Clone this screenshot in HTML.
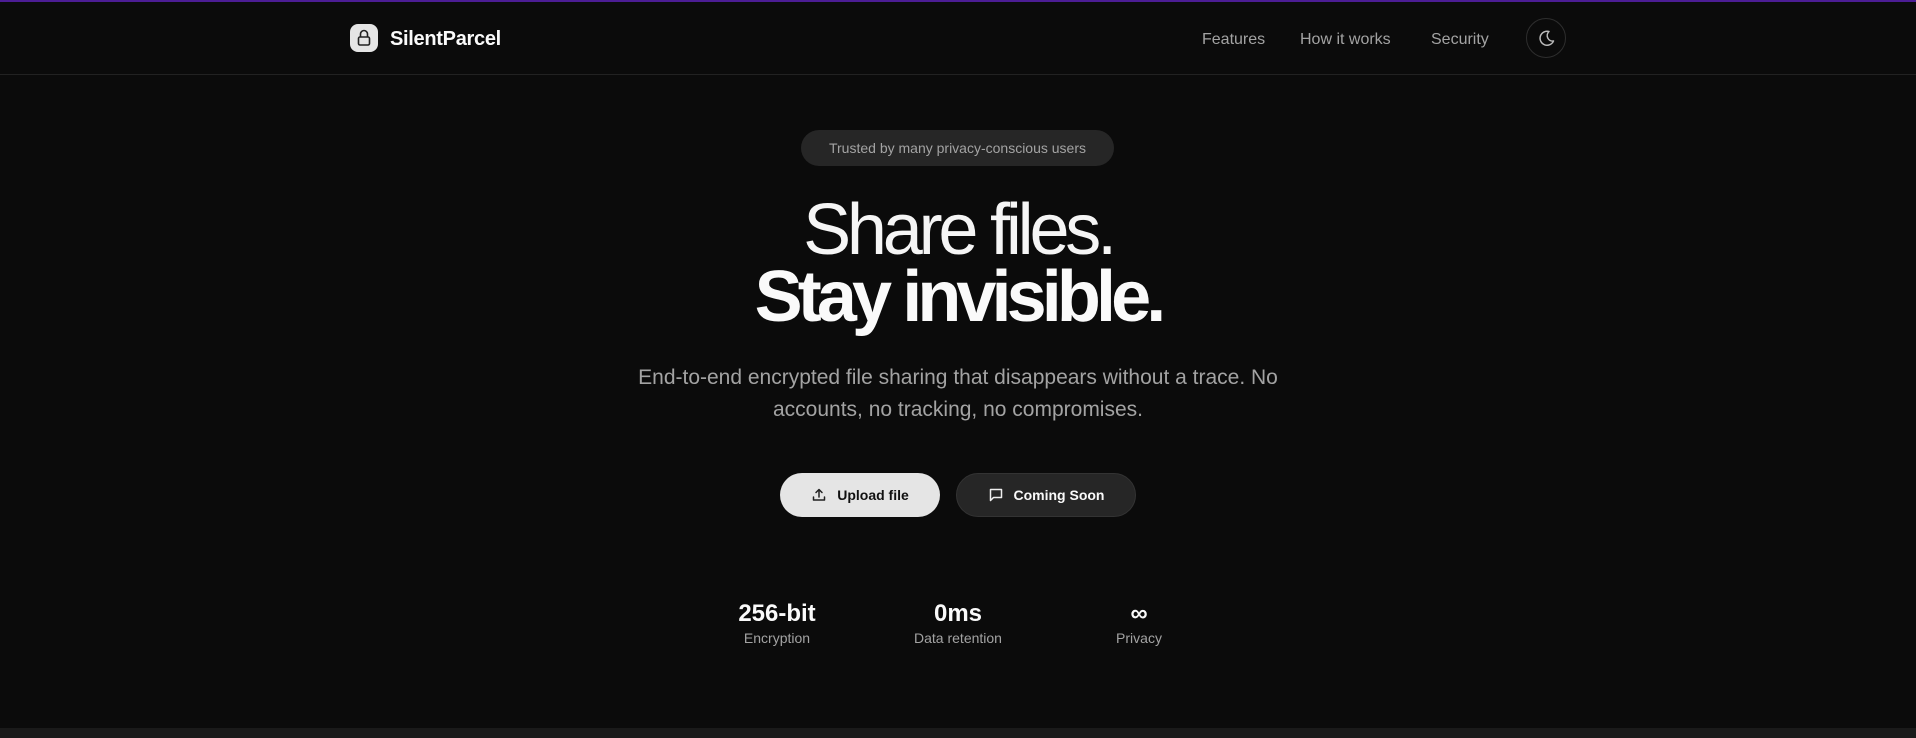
<!DOCTYPE html>
<html><head><meta charset="utf-8"><style>
*{margin:0;padding:0;box-sizing:border-box}
html,body{width:1916px;height:738px;overflow:hidden;background:#0b0b0b;font-family:"Liberation Sans",sans-serif;color:#fafafa}
.top{position:absolute;left:0;top:0;width:1916px;height:2px;background:#4c1d95}
.hdr{position:absolute;left:0;top:2px;width:1916px;height:73px;border-bottom:1px solid #222}
.logo{position:absolute;left:350px;top:24px;width:28px;height:28px;border-radius:8px;background:#e5e5e5}
.brand{position:absolute;left:390px;top:28px;font-size:20px;font-weight:bold;letter-spacing:-0.3px}
.nav{position:absolute;top:31px;font-size:16px;color:#a3a3a3}
.moon{position:absolute;left:1526px;top:18px;width:40px;height:40px;border-radius:50%;border:1px solid #2e2e2e}
.badge{position:absolute;left:801px;top:130px;width:313px;height:36px;border-radius:18px;background:#262626;color:#a3a3a3;font-size:14px;text-align:center;line-height:36px}
h1{position:absolute;left:0;width:1916px;text-align:center;font-size:72px;line-height:67px}
.l1{top:197px;font-weight:normal;color:#f5f5f5;letter-spacing:-4.2px}
.l2{top:264px;font-weight:bold;letter-spacing:-4.9px}
.p{position:absolute;left:0;width:1916px;text-align:center;font-size:21px;color:#a3a3a3;line-height:32px;top:362px}
.btn{position:absolute;top:473px;height:44px;border-radius:22px;font-size:14px;font-weight:bold;display:flex;align-items:center;justify-content:center;gap:10px}
.b1{left:780px;width:160px;background:#e5e5e5;color:#111}
.b2{left:956px;width:180px;background:#262626;border:1px solid #333;color:#fafafa}
.stat{position:absolute;top:600px;width:200px;text-align:center}
.stat b{display:block;font-size:24px;line-height:28px}
.stat span{display:block;font-size:14px;color:#a3a3a3;margin-top:2px}
.foot{position:absolute;left:0;top:728px;width:1916px;height:10px;background:#1a1a1a}
</style></head><body>
<div class="top"></div>
<div class="hdr"></div>
<div class="logo"><svg width="28" height="28" viewBox="0 0 28 28"><rect x="8.5" y="13" width="11" height="8" rx="1.5" fill="none" stroke="#222" stroke-width="1.6"/><path d="M10.5 13v-3a3.5 3.5 0 0 1 7 0v3" fill="none" stroke="#222" stroke-width="1.6"/></svg></div>
<div class="brand">SilentParcel</div>
<div class="nav" style="left:1202px">Features</div>
<div class="nav" style="left:1300px">How it works</div>
<div class="nav" style="left:1431px">Security</div>
<div class="moon"><svg width="38" height="38" viewBox="0 0 38 38"><path d="M22 12.5a7 7 0 1 0 4.5 9.5a5.5 5.5 0 0 1-4.5-9.5z" fill="none" stroke="#bbb" stroke-width="1.5" stroke-linejoin="round"/></svg></div>
<div class="badge">Trusted by many privacy-conscious users</div>
<h1 class="l1">Share files.</h1>
<h1 class="l2">Stay invisible.</h1>
<div class="p">End-to-end encrypted file sharing that disappears without a trace. No<br>accounts, no tracking, no compromises.</div>
<div class="btn b1"><svg width="16" height="16" viewBox="0 0 16 16" fill="none" stroke="#222" stroke-width="1.5" stroke-linecap="round" stroke-linejoin="round"><path d="M2.5 10v3h11v-3M8 10V2.5M5 5.5l3-3 3 3"/></svg>Upload file</div>
<div class="btn b2"><svg width="16" height="16" viewBox="0 0 16 16" fill="none" stroke="#eee" stroke-width="1.5" stroke-linejoin="round"><path d="M2.5 2.5h11v8h-8l-3 3z"/></svg>Coming Soon</div>
<div class="stat" style="left:677px"><b>256-bit</b><span>Encryption</span></div>
<div class="stat" style="left:858px"><b>0ms</b><span>Data retention</span></div>
<div class="stat" style="left:1039px"><b>∞</b><span>Privacy</span></div>
<div class="foot"></div>
</body></html>
